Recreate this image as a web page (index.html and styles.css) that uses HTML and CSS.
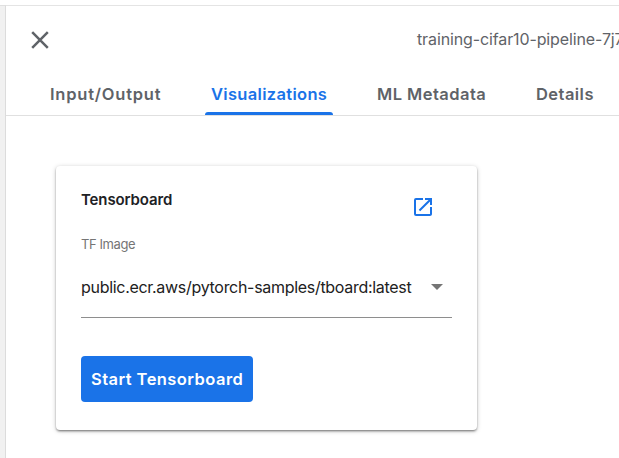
FILE: index.html
```html
<!DOCTYPE html>
<html lang="en">
<head>
<meta charset="utf-8">
<title>Visualizations</title>
<link rel="stylesheet" href="styles.css">
</head>
<body>
<div class="page">
  <aside class="rail"></aside>
  <main class="panel">
    <header class="header">
      <svg class="close" viewBox="0 0 18 18"><path d="M1.2 1.2 16.8 16.8M16.8 1.2 1.2 16.8"/></svg>
      <span class="title">training-cifar10-pipeline-7j7</span>
    </header>
    <nav class="tabs">
      <a class="tab tab-io">Input/Output</a>
      <a class="tab tab-vis active">Visualizations</a>
      <a class="tab tab-meta">ML Metadata</a>
      <a class="tab tab-details">Details</a>
    </nav>
    <section class="card">
      <div class="card-head">
        <h2 class="name">Tensorboard</h2>
        <svg class="open" viewBox="3 3 18 18"><path d="M19 19H5V5h7V3H5a2 2 0 0 0-2 2v14a2 2 0 0 0 2 2h14c1.100 0 2-.9 2-2v-7h-2v7zM14 3v2h3.590l-9.830 9.830 1.410 1.410L19 6.410V10h2V3h-7z"/></svg>
      </div>
      <div class="label">TF Image</div>
      <div class="select">
        <span class="value">public.ecr.aws/pytorch-samples/tboard:latest</span>
        <svg class="arrow" viewBox="0 0 12 6"><path d="M0 0h12L6 6z"/></svg>
      </div>
      <button class="start">Start Tensorboard</button>
    </section>
  </main>
</div>
</body>
</html>
```
FILE: styles.css
```css
* { box-sizing: border-box; }
body { margin: 0; background: #fff; font-family: Inter, Roboto, sans-serif; overflow: hidden; }
.page { display: flex; height: 458px; padding-top: 5px; }
.rail { flex: 0 0 6px; background: #f1f1f1; border-top: 1px solid #e0e0e0; border-right: 1px solid #dcdcdc; }
.panel { flex: 1; min-width: 0; border-top: 1px solid #e4e4e4; }
.header { display: flex; align-items: center; height: 67px; padding-left: 25px; overflow: hidden; }
.close { flex: none; width: 18px; height: 18px; fill: none; stroke: #5f6368; stroke-width: 2.500; }
.title { margin: 0 0 2px 368px; font-size: 16px; line-height: 20px; letter-spacing: -0.120px; color: #5f6368; white-space: nowrap; }
.tabs { display: flex; height: 43px; border-bottom: 1px solid #e0e0e0; padding-left: 38px; }
.tab { height: 42px; line-height: 43px; padding-left: 6px; font-size: 16.500px; font-weight: 600; letter-spacing: 0.450px; color: #5f6368; white-space: nowrap; }
.tab-io { width: 161px; letter-spacing: 0.780px; }
.tab-vis { width: 128px; letter-spacing: 0.320px; }
.tab-meta { width: 159px; margin-left: 38px; }
.active { position: relative; color: #1a73e8; }
.active::after { content: ""; position: absolute; left: 0; bottom: 0; width: 128px; height: 3px; border-radius: 3px 3px 0 0; background: #1a73e8; }
.card { width: 421px; height: 264px; margin: 50px 0 0 50px; padding: 25px; border-radius: 4px; background: #fff; box-shadow: 0 1px 5px rgba(0,0,0,.2), 0 2px 2px rgba(0,0,0,.14), 0 3px 1px -2px rgba(0,0,0,.12), 0 1px 2px rgba(0,0,0,.2); }
.card-head { display: flex; justify-content: space-between; height: 43px; padding-right: 20px; }
.name { margin: 0; font-size: 15px; line-height: 18px; font-weight: 600; letter-spacing: -0.120px; color: #202124; }
.open { width: 18px; height: 18px; margin-top: 7px; fill: #1a73e8; }
.label { font-size: 13px; line-height: 20px; letter-spacing: -0.400px; color: #757575; }
.select { display: flex; align-items: center; justify-content: space-between; height: 64px; padding: 3px 9px 0 0; border-bottom: 1px solid #8e8e8e; }
.value { font-size: 16px; line-height: 20px; letter-spacing: -0.300px; color: #212121; white-space: nowrap; }
.arrow { flex: none; width: 12px; height: 6px; fill: #757575; }
.start { display: block; width: 172px; height: 46px; margin-top: 38px; padding: 0 0 0 10px; border: 0; border-radius: 4px; background: #1a73e8; color: #fff; font: 600 16.500px/46px Inter, Roboto, sans-serif; letter-spacing: 0.440px; text-align: left; white-space: nowrap; }
```
